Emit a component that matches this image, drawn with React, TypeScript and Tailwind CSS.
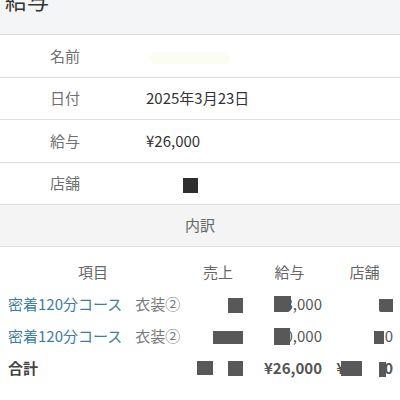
import React from "react";

const font = { fontFamily: '"Noto Sans CJK JP", "Noto Sans", sans-serif' };

function Block({ className }: { className: string }) {
  return <span className={"inline-block bg-[#585858] align-middle " + className} />;
}

function InfoRow({
  label,
  tall,
  children,
}: {
  label: string;
  tall?: boolean;
  children?: React.ReactNode;
}) {
  return (
    <div
      className={
        "flex items-center border-b border-[#dedede] text-[15px] " +
        (tall ? "h-[43px]" : "h-[42px]")
      }
    >
      <div className="w-[146px] pl-[50px] text-[#707070]">{label}</div>
      <div className="text-[#333]">{children}</div>
    </div>
  );
}

function ItemCell() {
  return (
    <div className="flex items-center pl-[8px]">
      <span className="text-[#3b7ea3]">密着120分コース</span>
      <span className="ml-[13px] text-[#777]">衣装②</span>
    </div>
  );
}

export default function App() {
  return (
    <div className="w-[400px] h-[400px] overflow-hidden bg-white" style={font}>
      <div className="h-[35px] overflow-hidden border-b border-[#dcdcdc] bg-[#f4f5f7]">
        <div className="-mt-[12px] pl-[5px] text-[22px] leading-none text-[#333]">給与</div>
      </div>
      <InfoRow label="名前" tall>
        <span className="ml-[4px] inline-block h-[12px] w-[80px] rounded-full bg-[#fbfcf2] align-middle" />
      </InfoRow>
      <InfoRow label="日付">2025年3月23日</InfoRow>
      <InfoRow label="給与" tall>¥26,000</InfoRow>
      <InfoRow label="店舗">
        <span className="ml-[37px] inline-block h-[15px] w-[15px] bg-[#2e2e2e] align-middle" />
      </InfoRow>
      <div className="flex h-[42px] items-center justify-center border-b border-[#dedede] bg-[#f4f4f4] text-[15px] text-[#666]">
        内訳
      </div>

      <div className="grid grid-cols-[186px_64px_79px_71px] auto-rows-[32px] items-center pt-[9px] text-[15px] text-[#666]">
        <div className="text-center">項目</div>
        <div className="text-center">売上</div>
        <div className="text-center">給与</div>
        <div className="text-center">店舗</div>

        <ItemCell />
        <div className="pr-[7px] text-right">
          <Block className="h-[15px] w-[15px]" />
        </div>
        <div className="pr-[7px] text-right text-[#555]">
          <span className="relative">
            <Block className="absolute left-[-11px] top-[3px] h-[16px] w-[17px] rounded-br-[4px]" />
            8,000
          </span>
        </div>
        <div className="pr-[7px] text-right">
          <Block className="h-[13px] w-[14px] rounded-bl-[2px]" />
        </div>

        <ItemCell />
        <div className="pr-[7px] text-right">
          <Block className="h-[13px] w-[30px]" />
        </div>
        <div className="pr-[7px] text-right text-[#555]">
          <span className="relative">
            <Block className="absolute left-[-11px] top-[3px] h-[17px] w-[16px]" />
            0,000
          </span>
        </div>
        <div className="pr-[7px] text-right text-[#555]">
          <Block className="mr-[1px] h-[13px] w-[10px]" />0
        </div>

        <div className="pl-[8px] font-bold text-[#444]">合計</div>
        <div className="flex items-center justify-end gap-[15px] pr-[7px]">
          <Block className="h-[14px] w-[16px]" />
          <Block className="h-[15px] w-[15px]" />
        </div>
        <div className="pr-[7px] text-right font-bold text-[#555]">¥26,000</div>
        <div className="flex items-center justify-end pr-[7px] font-bold text-[#555]">
          <span className="relative">
            ¥<Block className="absolute left-[5px] top-[4px] h-[15px] w-[21px]" />
          </span>
          <span className="ml-[34px]">
            <Block className="mr-[-2px] h-[15px] w-[7px]" />0
          </span>
        </div>
      </div>
    </div>
  );
}
